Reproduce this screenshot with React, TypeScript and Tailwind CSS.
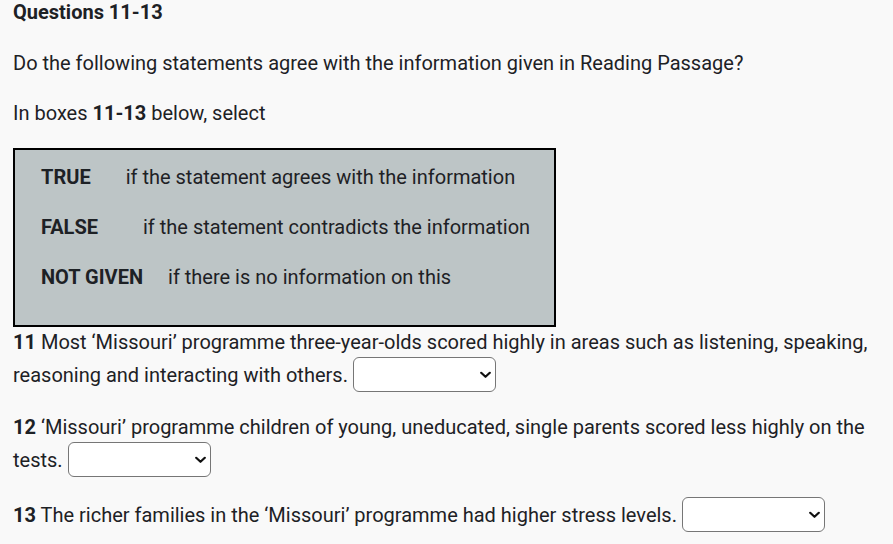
import React from "react";

function Sel() {
  return (
    <span className="relative inline-block overflow-hidden align-[-10px]">
      <select className="block h-[35px] w-[143px] appearance-none rounded-[6px] border border-[#767676] bg-white" defaultValue="">
        <option value=""></option>
        <option value="TRUE">TRUE</option>
        <option value="FALSE">FALSE</option>
        <option value="NOT GIVEN">NOT GIVEN</option>
      </select>
      <svg
        className="pointer-events-none absolute right-[5px] top-1/2 -translate-y-1/2"
        width="11"
        height="7"
        viewBox="0 0 11 7"
        fill="none"
      >
        <path d="M1.2 1.2 L5.5 5.3 L9.8 1.2" stroke="#111" strokeWidth="2.2" strokeLinecap="round" strokeLinejoin="round" />
      </svg>
    </span>
  );
}

export default function App() {
  return (
    <div
      className="min-h-[544px] w-full bg-[#f9f9f9] pl-[13px] pr-[13px] text-[20px] leading-[30px] text-[#1d2125]"
      style={{ fontFamily: "Roboto, 'Liberation Sans', sans-serif" }}
    >
      <h3 className="mb-[24px] text-[20px] font-bold leading-[24px]">Questions 11-13</h3>
      <p className="mb-[20px]">Do the following statements agree with the information given in Reading Passage?</p>
      <p className="mb-[20px]">
        In boxes <b>11-13</b> below, select
      </p>
      <div className="inline-block border-2 border-black bg-[#bdc5c6] pl-[26px] pr-[24px] pb-[13px] pt-[12px]">
        <p className="mb-[20px]">
          <b>TRUE</b>
          <span className="ml-[35px]">if the statement agrees with the information</span>
        </p>
        <p className="mb-[20px]">
          <b>FALSE</b>
          <span className="ml-[45px]">if the statement contradicts the information</span>
        </p>
        <p className="mb-[20px]">
          <b>NOT GIVEN</b>
          <span className="ml-[25px]">if there is no information on this</span>
        </p>
      </div>
      <p className="mb-[20px]">
        <b>11</b> Most ‘Missouri’ programme three-year-olds scored highly in areas such as listening, speaking, reasoning and interacting with others. <Sel />
      </p>
      <p className="mb-[20px]">
        <b>12</b> ‘Missouri’ programme children of young, uneducated, single parents scored less highly on the tests. <Sel />
      </p>
      <p className="mb-[20px]">
        <b>13</b> The richer families in the ‘Missouri’ programme had higher stress levels. <Sel />
      </p>
    </div>
  );
}
